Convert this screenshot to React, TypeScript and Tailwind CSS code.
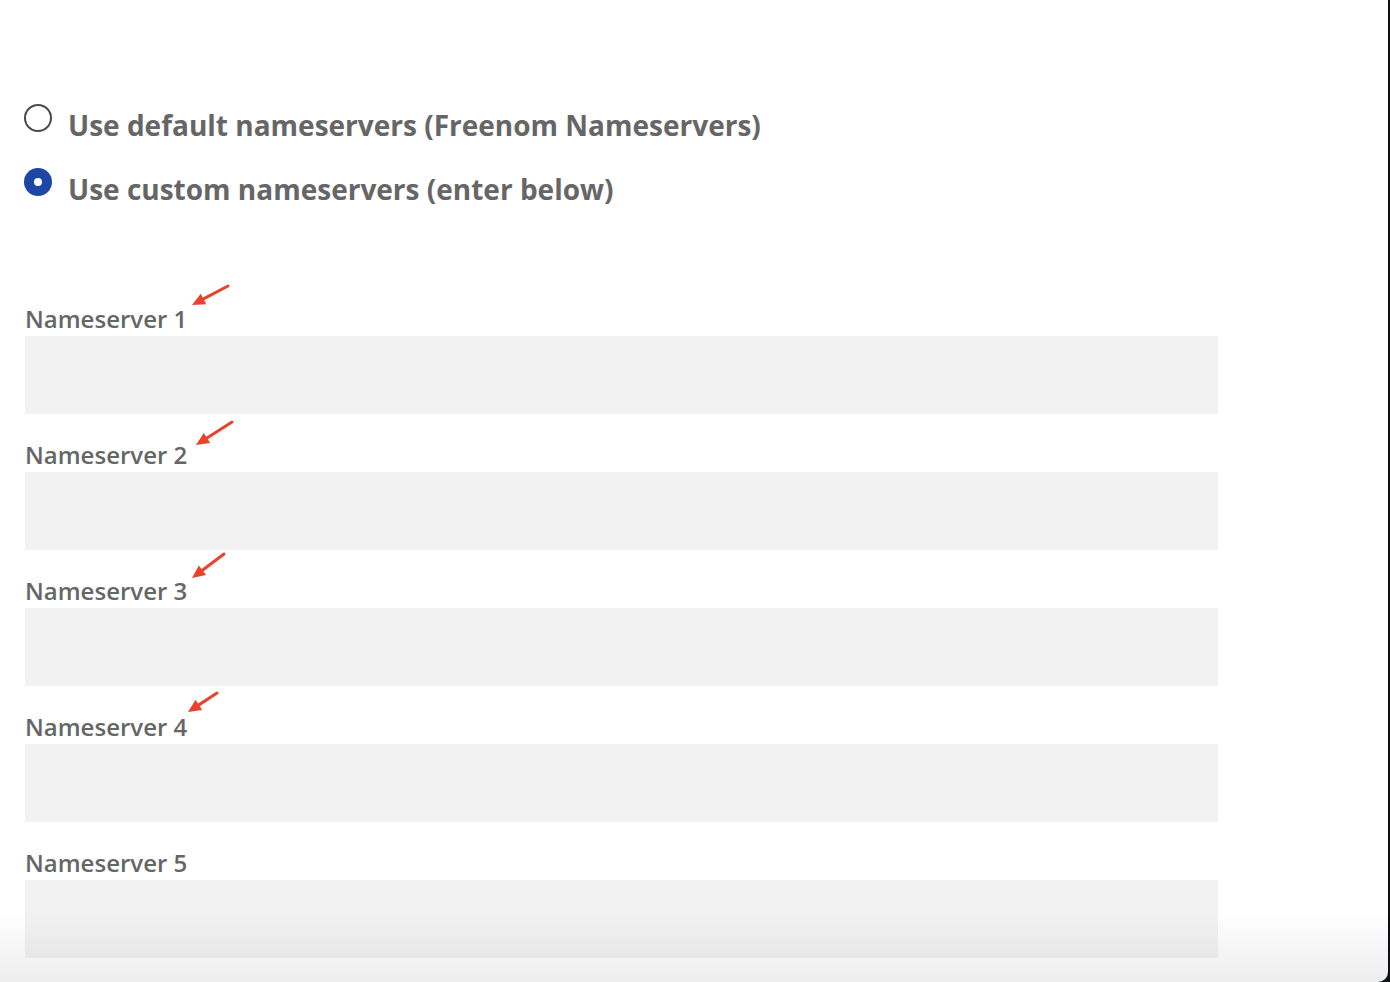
import React from "react";

const labels = ["Nameserver 1", "Nameserver 2", "Nameserver 3", "Nameserver 4", "Nameserver 5"];

// arrow tail -> head, in page px (only the first four fields get one)
const arrows = [
  { x1: 228, y1: 286, x2: 192, y2: 305 },
  { x1: 232, y1: 422, x2: 196, y2: 445 },
  { x1: 224, y1: 554, x2: 192, y2: 578 },
  { x1: 217, y1: 693, x2: 188, y2: 712 },
];

function Arrow({ x1, y1, x2, y2 }: { x1: number; y1: number; x2: number; y2: number }) {
  const ang = Math.atan2(y2 - y1, x2 - x1);
  const len = 13;
  const w = 6;
  const bx = x2 - Math.cos(ang) * len;
  const by = y2 - Math.sin(ang) * len;
  const px = -Math.sin(ang) * w;
  const py = Math.cos(ang) * w;
  return (
    <g>
      <line x1={x1} y1={y1} x2={bx} y2={by} stroke="#e8432d" strokeWidth={3} strokeLinecap="round" />
      <polygon points={`${x2},${y2} ${bx + px},${by + py} ${bx - px},${by - py}`} fill="#e8432d" />
    </g>
  );
}

export default function App() {
  return (
    <div className="flex h-[982px] w-[1390px] bg-[#15171c] overflow-hidden" style={{ fontFamily: '"Open Sans", "Liberation Sans", sans-serif' }}>
      <div className="relative flex-1 bg-white rounded-br-[10px] overflow-hidden text-[#666666]">
        <div className="pt-[105px] pl-6 pr-[170px]">
          {/* 单选：默认 / 自定义 */}
          <div className="flex flex-col gap-6">
            <label className="flex items-start gap-4 h-10">
              <span className="mt-[-1px] w-7 h-7 rounded-full border-2 border-[#4a4a4a] bg-white shrink-0"></span>
              <span className="text-[28px] leading-10 font-bold">Use default nameservers (Freenom Nameservers)</span>
            </label>
            <label className="flex items-start gap-4 h-10">
              <span className="mt-[-1px] w-7 h-7 rounded-full bg-[#1c47a6] shrink-0 flex items-center justify-center">
                <span className="w-2 h-2 rounded-full bg-white"></span>
              </span>
              <span className="text-[28px] leading-10 font-bold">Use custom nameservers (enter below)</span>
            </label>
          </div>

          {/* 名称服务器输入框 */}
          <div className="mt-[94px] pl-px flex flex-col gap-[25px]">
            {labels.map((l) => (
              <div key={l}>
                <div className="text-2xl leading-8 font-semibold h-[33px]">{l}</div>
                <div className="h-[78px] bg-[#f2f2f2]"></div>
              </div>
            ))}
          </div>
        </div>

        <svg className="absolute inset-0 pointer-events-none" width="1388" height="982">
          {arrows.map((a, i) => (
            <Arrow key={i} {...a} />
          ))}
        </svg>

        {/* 底部阴影渐变 */}
        <div className="absolute left-0 right-0 bottom-0 h-[70px] pointer-events-none bg-gradient-to-b from-transparent to-black/[0.07]"></div>
      </div>
      <div className="w-[2px] bg-[#0d0f12]"></div>
    </div>
  );
}
